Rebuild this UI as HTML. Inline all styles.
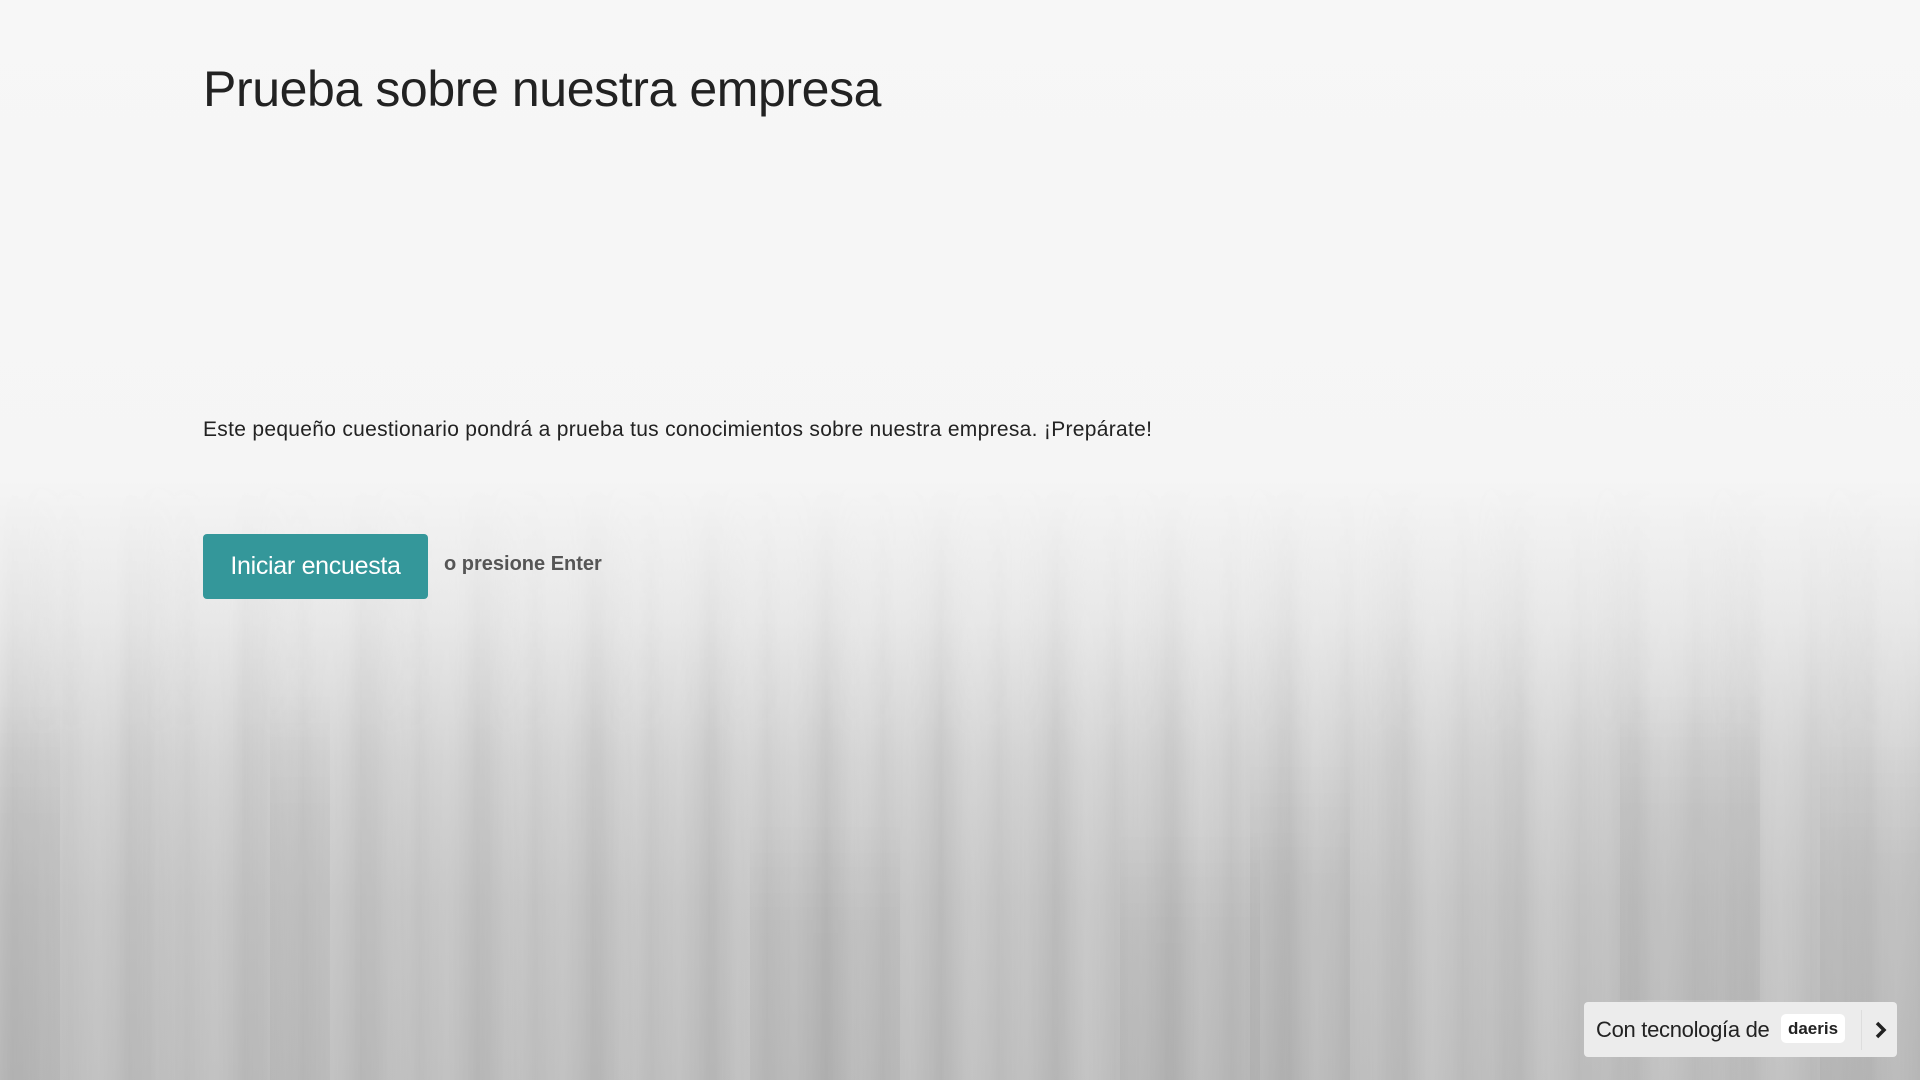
<!DOCTYPE html>
<html><head><meta charset="utf-8"><style>
html,body{margin:0;padding:0;width:1920px;height:1080px;overflow:hidden}
body{position:relative;font-family:"Liberation Sans",sans-serif;
background:linear-gradient(180deg,#f7f7f7 0px,#f5f5f5 480px,#e8e8e8 620px,#d3d3d3 760px,#c6c6c6 900px,#bfbfbf 1080px);}
.bars{position:absolute;left:0;top:480px;width:1920px;height:600px;
background:
repeating-linear-gradient(90deg,rgba(0,0,0,0) 0px,rgba(0,0,0,.025) 13px,rgba(0,0,0,0) 27px,rgba(255,255,255,.05) 41px,rgba(0,0,0,0) 58px),
repeating-linear-gradient(90deg,rgba(0,0,0,0) 0px,rgba(0,0,0,.03) 37px,rgba(255,255,255,.04) 71px,rgba(0,0,0,0) 113px);
-webkit-mask-image:linear-gradient(180deg,transparent 0,#000 260px);mask-image:linear-gradient(180deg,transparent 0,#000 260px)}
.dark{position:absolute;background:rgba(0,0,0,.035);-webkit-mask-image:linear-gradient(180deg,transparent 0,#000 120px);mask-image:linear-gradient(180deg,transparent 0,#000 120px)}
h1{position:absolute;left:203px;top:60px;margin:0;font-weight:normal;font-size:50px;color:#222;letter-spacing:-0.4px}
p{position:absolute;left:203px;top:418px;margin:0;font-size:21px;color:#222;letter-spacing:0.3px}
.btn{position:absolute;left:203px;top:534px;width:225px;height:65px;background:#34979a;border-radius:4px;color:#fff;font-size:25px;line-height:65px;text-align:center;letter-spacing:-0.3px}
.enter{position:absolute;left:444px;top:553px;font-size:20px;font-weight:bold;color:#555}
.badge{position:absolute;left:1584px;top:1002px;width:313px;height:55px;background:#ececec;border-radius:4px;font-size:22px;color:#222}
.badge .t{position:absolute;left:12px;top:15px;letter-spacing:-0.3px}
.badge .logo{position:absolute;left:197px;top:12px;width:64px;height:29px;background:#fff;border-radius:5px;font-weight:bold;font-size:17px;line-height:29px;text-align:center;color:#222}
.badge .sep{position:absolute;left:277px;top:8px;width:1px;height:40px;background:#ddd}
.badge svg{position:absolute;left:288px;top:18px}
</style></head><body>
<div class="bars"></div>
<div class="dark" style="left:0;top:700px;width:60px;height:380px"></div>
<div class="dark" style="left:270px;top:690px;width:60px;height:390px"></div>
<div class="dark" style="left:750px;top:820px;width:150px;height:260px"></div>
<div class="dark" style="left:1120px;top:830px;width:140px;height:250px"></div>
<div class="dark" style="left:1250px;top:760px;width:100px;height:320px"></div>
<div class="dark" style="left:1620px;top:690px;width:140px;height:310px"></div>
<div class="dark" style="left:1820px;top:740px;width:100px;height:340px"></div>
<h1>Prueba sobre nuestra empresa</h1>
<p>Este pequeño cuestionario pondrá a prueba tus conocimientos sobre nuestra empresa. ¡Prepárate!</p>
<div class="btn">Iniciar encuesta</div>
<div class="enter">o presione Enter</div>
<div class="badge"><span class="t">Con tecnología de</span><span class="logo">daeris</span><span class="sep"></span>
<svg width="18" height="20" viewBox="0 0 18 20"><path d="M5 3 L12 10 L5 17" fill="none" stroke="#222" stroke-width="3.5"/></svg></div>
</body></html>
